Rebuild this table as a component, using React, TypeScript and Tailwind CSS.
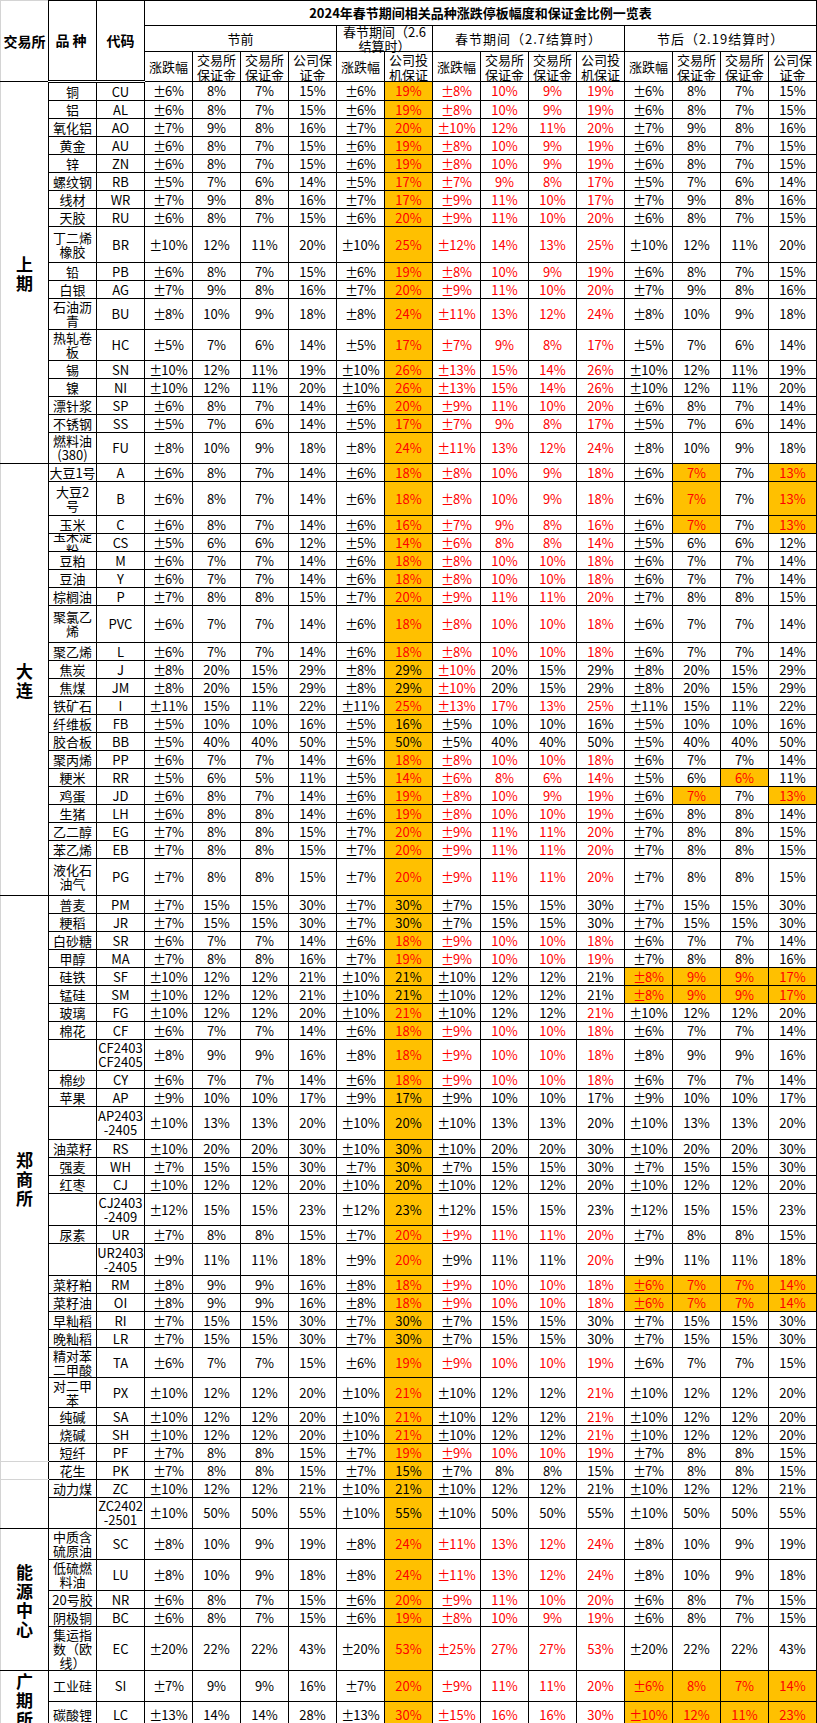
import React from 'react';

type Row = { name: string; code: string; h: number; v: string; red?: string; hi?: string };
type Block = { label: string; rows: Row[]; grayBottom?: boolean; grayTop?: boolean };

// masks over the 14 value columns: 0-3 节前, 4-5 2.6, 6-9 2.7, 10-13 节后
const STD = '00000111110000';
const FG = '00000100010000';
const JJ = '00000010000000';
const HA = '00000000000101';
const HR = '00000000000010';
const H4 = '00000000001111';

const CU = '±6% 8% 7% 15% ±6% 19% ±8% 10% 9% 19% ±6% 8% 7% 15%';
const RB = '±5% 7% 6% 14% ±5% 17% ±7% 9% 8% 17% ±5% 7% 6% 14%';
const BU = '±8% 10% 9% 18% ±8% 24% ±11% 13% 12% 24% ±8% 10% 9% 18%';
const DA = '±6% 8% 7% 14% ±6% 18% ±8% 10% 9% 18% ±6% 7% 7% 13%';
const M = '±6% 7% 7% 14% ±6% 18% ±8% 10% 10% 18% ±6% 7% 7% 14%';
const P = '±7% 8% 8% 15% ±7% 20% ±9% 11% 11% 20% ±7% 8% 8% 15%';
const JT = '±8% 20% 15% 29% ±8% 29% ±10% 20% 15% 29% ±8% 20% 15% 29%';
const PM = '±7% 15% 15% 30% ±7% 30% ±7% 15% 15% 30% ±7% 15% 15% 30%';
const SF = '±10% 12% 12% 21% ±10% 21% ±10% 12% 12% 21% ±8% 9% 9% 17%';
const CF = '±6% 7% 7% 14% ±6% 18% ±9% 10% 10% 18% ±6% 7% 7% 14%';
const RM = '±8% 9% 9% 16% ±8% 18% ±9% 10% 10% 18% ±6% 7% 7% 14%';
const PX = '±10% 12% 12% 20% ±10% 21% ±10% 12% 12% 21% ±10% 12% 12% 20%';

const blocks: Block[] = [
  {
    label: '上期',
    rows: [
      { name: '铜', code: 'CU', h: 18, v: CU, red: STD },
      { name: '铝', code: 'AL', h: 18, v: CU, red: STD },
      { name: '氧化铝', code: 'AO', h: 18, v: '±7% 9% 8% 16% ±7% 20% ±10% 12% 11% 20% ±7% 9% 8% 16%', red: STD },
      { name: '黄金', code: 'AU', h: 18, v: CU, red: STD },
      { name: '锌', code: 'ZN', h: 18, v: CU, red: STD },
      { name: '螺纹钢', code: 'RB', h: 18, v: RB, red: STD },
      { name: '线材', code: 'WR', h: 18, v: '±7% 9% 8% 16% ±7% 17% ±9% 11% 10% 17% ±7% 9% 8% 16%', red: STD },
      { name: '天胶', code: 'RU', h: 18, v: '±6% 8% 7% 15% ±6% 20% ±9% 11% 10% 20% ±6% 8% 7% 15%', red: STD },
      { name: '丁二烯\n橡胶', code: 'BR', h: 36, v: '±10% 12% 11% 20% ±10% 25% ±12% 14% 13% 25% ±10% 12% 11% 20%', red: STD },
      { name: '铅', code: 'PB', h: 18, v: CU, red: STD },
      { name: '白银', code: 'AG', h: 18, v: '±7% 9% 8% 16% ±7% 20% ±9% 11% 10% 20% ±7% 9% 8% 16%', red: STD },
      { name: '石油沥\n青', code: 'BU', h: 31, v: BU, red: STD },
      { name: '热轧卷\n板', code: 'HC', h: 31, v: RB, red: STD },
      { name: '锡', code: 'SN', h: 18, v: '±10% 12% 11% 19% ±10% 26% ±13% 15% 14% 26% ±10% 12% 11% 19%', red: STD },
      { name: '镍', code: 'NI', h: 18, v: '±10% 12% 11% 20% ±10% 26% ±13% 15% 14% 26% ±10% 12% 11% 20%', red: STD },
      { name: '漂针浆', code: 'SP', h: 18, v: '±6% 8% 7% 14% ±6% 20% ±9% 11% 10% 20% ±6% 8% 7% 14%', red: STD },
      { name: '不锈钢', code: 'SS', h: 18, v: RB, red: STD },
      { name: '燃料油\n(380)', code: 'FU', h: 31, v: BU, red: STD },
    ],
  },
  {
    label: '大连',
    rows: [
      { name: '大豆1号', code: 'A', h: 18, v: DA, red: STD, hi: HA },
      { name: '大豆2\n号', code: 'B', h: 34, v: DA, red: STD, hi: HA },
      { name: '玉米', code: 'C', h: 18, v: '±6% 8% 7% 14% ±6% 16% ±7% 9% 8% 16% ±6% 7% 7% 13%', red: STD, hi: HA },
      { name: '玉米淀\n粉', code: 'CS', h: 18, v: '±5% 6% 6% 12% ±5% 14% ±6% 8% 8% 14% ±5% 6% 6% 12%', red: STD },
      { name: '豆粕', code: 'M', h: 18, v: M, red: STD },
      { name: '豆油', code: 'Y', h: 18, v: M, red: STD },
      { name: '棕榈油', code: 'P', h: 18, v: P, red: STD },
      { name: '聚氯乙\n烯', code: 'PVC', h: 37, v: M, red: STD },
      { name: '聚乙烯', code: 'L', h: 18, v: M, red: STD },
      { name: '焦炭', code: 'J', h: 18, v: JT, red: JJ },
      { name: '焦煤', code: 'JM', h: 18, v: JT, red: JJ },
      { name: '铁矿石', code: 'I', h: 18, v: '±11% 15% 11% 22% ±11% 25% ±13% 17% 13% 25% ±11% 15% 11% 22%', red: STD },
      { name: '纤维板', code: 'FB', h: 18, v: '±5% 10% 10% 16% ±5% 16% ±5% 10% 10% 16% ±5% 10% 10% 16%' },
      { name: '胶合板', code: 'BB', h: 18, v: '±5% 40% 40% 50% ±5% 50% ±5% 40% 40% 50% ±5% 40% 40% 50%' },
      { name: '聚丙烯', code: 'PP', h: 18, v: M, red: STD },
      { name: '粳米', code: 'RR', h: 18, v: '±5% 6% 5% 11% ±5% 14% ±6% 8% 6% 14% ±5% 6% 6% 11%', red: STD, hi: HR },
      { name: '鸡蛋', code: 'JD', h: 18, v: '±6% 8% 7% 14% ±6% 19% ±8% 10% 9% 19% ±6% 7% 7% 13%', red: STD, hi: HA },
      { name: '生猪', code: 'LH', h: 18, v: '±6% 8% 8% 14% ±6% 19% ±8% 10% 10% 19% ±6% 8% 8% 14%', red: STD },
      { name: '乙二醇', code: 'EG', h: 18, v: P, red: STD },
      { name: '苯乙烯', code: 'EB', h: 18, v: P, red: STD },
      { name: '液化石\n油气', code: 'PG', h: 37, v: P, red: STD },
    ],
  },
  {
    label: '郑商所',
    grayBottom: true,
    rows: [
      { name: '普麦', code: 'PM', h: 18, v: PM },
      { name: '粳稻', code: 'JR', h: 18, v: PM },
      { name: '白砂糖', code: 'SR', h: 18, v: CF, red: STD },
      { name: '甲醇', code: 'MA', h: 18, v: '±7% 8% 8% 16% ±7% 19% ±9% 10% 10% 19% ±7% 8% 8% 16%', red: STD },
      { name: '硅铁', code: 'SF', h: 18, v: SF, hi: H4 },
      { name: '锰硅', code: 'SM', h: 18, v: SF, hi: H4 },
      { name: '玻璃', code: 'FG', h: 18, v: '±10% 12% 12% 20% ±10% 21% ±10% 12% 12% 21% ±10% 12% 12% 20%', red: FG },
      { name: '棉花', code: 'CF', h: 18, v: CF, red: STD },
      { name: '', code: 'CF2403\nCF2405', h: 31, v: '±8% 9% 9% 16% ±8% 18% ±9% 10% 10% 18% ±8% 9% 9% 16%', red: STD },
      { name: '棉纱', code: 'CY', h: 18, v: CF, red: STD },
      { name: '苹果', code: 'AP', h: 18, v: '±9% 10% 10% 17% ±9% 17% ±9% 10% 10% 17% ±9% 10% 10% 17%' },
      { name: '', code: 'AP2403\n-2405', h: 33, v: '±10% 13% 13% 20% ±10% 20% ±10% 13% 13% 20% ±10% 13% 13% 20%' },
      { name: '油菜籽', code: 'RS', h: 18, v: '±10% 20% 20% 30% ±10% 30% ±10% 20% 20% 30% ±10% 20% 20% 30%' },
      { name: '强麦', code: 'WH', h: 18, v: PM },
      { name: '红枣', code: 'CJ', h: 18, v: '±10% 12% 12% 20% ±10% 20% ±10% 12% 12% 20% ±10% 12% 12% 20%' },
      { name: '', code: 'CJ2403\n-2409', h: 32, v: '±12% 15% 15% 23% ±12% 23% ±12% 15% 15% 23% ±12% 15% 15% 23%' },
      { name: '尿素', code: 'UR', h: 18, v: '±7% 8% 8% 15% ±7% 20% ±9% 11% 11% 20% ±7% 8% 8% 15%', red: STD },
      { name: '', code: 'UR2403\n-2405', h: 32, v: '±9% 11% 11% 18% ±9% 20% ±9% 11% 11% 20% ±9% 11% 11% 18%', red: FG },
      { name: '菜籽粕', code: 'RM', h: 18, v: RM, red: STD, hi: H4 },
      { name: '菜籽油', code: 'OI', h: 18, v: RM, red: STD, hi: H4 },
      { name: '早籼稻', code: 'RI', h: 18, v: PM },
      { name: '晚籼稻', code: 'LR', h: 18, v: PM },
      { name: '精对苯\n二甲酸', code: 'TA', h: 30, v: '±6% 7% 7% 15% ±6% 19% ±9% 10% 10% 19% ±6% 7% 7% 15%', red: STD },
      { name: '对二甲\n苯', code: 'PX', h: 30, v: PX, red: FG },
      { name: '纯碱', code: 'SA', h: 18, v: PX, red: FG },
      { name: '烧碱', code: 'SH', h: 18, v: PX, red: FG },
      { name: '短纤', code: 'PF', h: 18, v: '±7% 8% 8% 15% ±7% 19% ±9% 10% 10% 19% ±7% 8% 8% 15%', red: STD },
    ],
  },
  {
    label: '',
    grayTop: true,
    grayBottom: true,
    rows: [{ name: '花生', code: 'PK', h: 18, v: '±7% 8% 8% 15% ±7% 15% ±7% 8% 8% 15% ±7% 8% 8% 15%' }],
  },
  {
    label: '',
    grayTop: true,
    rows: [
      { name: '动力煤', code: 'ZC', h: 18, v: '±10% 12% 12% 21% ±10% 21% ±10% 12% 12% 21% ±10% 12% 12% 21%' },
      { name: '', code: 'ZC2402\n-2501', h: 31, v: '±10% 50% 50% 55% ±10% 55% ±10% 50% 50% 55% ±10% 50% 50% 55%' },
    ],
  },
  {
    label: '能源中心',
    rows: [
      { name: '中质含\n硫原油', code: 'SC', h: 31, v: '±8% 10% 9% 19% ±8% 24% ±11% 13% 12% 24% ±8% 10% 9% 19%', red: STD },
      { name: '低硫燃\n料油', code: 'LU', h: 31, v: BU, red: STD },
      { name: '20号胶', code: 'NR', h: 18, v: '±6% 8% 7% 15% ±6% 20% ±9% 11% 10% 20% ±6% 8% 7% 15%', red: STD },
      { name: '阴极铜', code: 'BC', h: 18, v: CU, red: STD },
      { name: '集运指\n数（欧\n线）', code: 'EC', h: 44, v: '±20% 22% 22% 43% ±20% 53% ±25% 27% 27% 53% ±20% 22% 22% 43%', red: STD },
    ],
  },
  {
    label: '广期所',
    rows: [
      { name: '工业硅', code: 'SI', h: 28, v: '±7% 9% 9% 16% ±7% 20% ±9% 11% 11% 20% ±6% 8% 7% 14%', red: STD, hi: H4 },
      { name: '碳酸锂', code: 'LC', h: 24, v: '±13% 14% 14% 28% ±13% 30% ±15% 16% 16% 30% ±10% 12% 11% 23%', red: STD, hi: H4 },
    ],
  },
];

const heightClass: Record<number, string> = {
  18: 'h-[17px]',
  24: 'h-[23px]',
  28: 'h-[27px]',
  30: 'h-[29px]',
  31: 'h-[30px]',
  32: 'h-[31px]',
  33: 'h-[32px]',
  34: 'h-[33px]',
  36: 'h-[35px]',
  37: 'h-[36px]',
  44: 'h-[43px]',
};

const subHeads = [
  '涨跌幅', '交易所\n保证金', '交易所\n保证金', '公司保\n证金',
  '涨跌幅', '公司投\n机保证',
  '涨跌幅', '交易所\n保证金', '交易所\n保证金', '公司投\n机保证',
  '涨跌幅', '交易所\n保证金', '交易所\n保证金', '公司保\n证金',
];

const cell = 'border border-black p-0 align-middle';

function Value({ text }: { text: string }) {
  if (text.startsWith('±')) {
    return (
      <>
        <span className="inline-block w-[12px] text-center">±</span>
        {text.slice(1)}
      </>
    );
  }
  return <>{text}</>;
}

export default function App() {
  return (
    <div className="w-[817px] bg-white text-black font-['Liberation_Sans_Narrow','Noto_Sans_CJK_SC',sans-serif]">
      <table className="w-[817px] table-fixed border-collapse">
        <colgroup>
          {Array.from({ length: 17 }).map((_, i) => (
            <col key={i} className="w-[48px]" />
          ))}
        </colgroup>
        <thead>
          <tr>
            <th rowSpan={3} className="border border-black border-l-[#d4d4d4] border-t-[#d4d4d4] p-0 align-middle text-[14px] font-bold">
              交易所
            </th>
            <th rowSpan={3} className="border border-double border-black border-b-[3px] p-0 align-middle text-[14px] font-bold tracking-[3px]">
              品种
            </th>
            <th rowSpan={3} className="border border-double border-black border-b-[3px] p-0 align-middle text-[14px] font-bold">
              代码
            </th>
            <th colSpan={14} className={cell}>
              <div className="flex h-[24px] items-center justify-center text-[13px] font-bold">
                2024年春节期间相关品种涨跌停板幅度和保证金比例一览表
              </div>
            </th>
          </tr>
          <tr>
            <th colSpan={4} className={cell}>
              <div className="flex h-[25px] items-center justify-center text-[13px] font-normal">节前</div>
            </th>
            <th colSpan={2} className={cell}>
              <div className="flex h-[25px] items-center justify-center whitespace-pre-line text-[13px] leading-[14px] font-normal">
                {'春节期间（2.6\n结算时）'}
              </div>
            </th>
            <th colSpan={4} className={cell}>
              <div className="flex h-[25px] items-center justify-center text-[13px] font-normal tracking-[1px]">
                春节期间（2.7结算时）
              </div>
            </th>
            <th colSpan={4} className={cell}>
              <div className="flex h-[25px] items-center justify-center text-[13px] font-normal tracking-[1px]">
                节后（2.19结算时）
              </div>
            </th>
          </tr>
          <tr>
            {subHeads.map((s, i) => (
              <th key={i} className={cell}>
                <div className="flex h-[29px] items-center justify-center whitespace-pre-line text-[13px] leading-[15px] font-normal">
                  {s}
                </div>
              </th>
            ))}
          </tr>
        </thead>
        <tbody>
          {blocks.map((b, bi) =>
            b.rows.map((r, ri) => {
              const vals = r.v.split(' ');
              const hc = heightClass[r.h];
              return (
                <tr key={`${bi}-${ri}`}>
                  {ri === 0 && (
                    <td
                      rowSpan={b.rows.length}
                      className={`border border-black border-l-[#d4d4d4] p-0 align-middle ${
                        b.grayBottom ? 'border-b-[#d4d4d4]' : ''
                      } ${b.grayTop ? 'border-t-[#d4d4d4]' : ''}`}
                    >
                      <div className="flex flex-col items-center text-[17px] leading-[19px] font-bold">
                        {[...b.label].map((c, ci) => (
                          <span key={ci}>{c}</span>
                        ))}
                      </div>
                    </td>
                  )}
                  <td className={cell}>
                    <div className={`flex items-center justify-center overflow-hidden whitespace-pre-line text-center text-[13px] leading-[14px] ${hc}`}>
                      {r.name}
                    </div>
                  </td>
                  <td className={cell}>
                    <div className={`flex items-center justify-center overflow-hidden whitespace-pre-line text-center text-[13px] leading-[14px] ${hc}`}>
                      {r.code}
                    </div>
                  </td>
                  {vals.map((val, j) => {
                    const hi = j === 5 || r.hi?.[j] === '1';
                    const red = r.red?.[j] === '1' || r.hi?.[j] === '1';
                    return (
                      <td key={j} className={`${cell} ${hi ? 'bg-[#ffc000]' : 'bg-white'}`}>
                        <div
                          className={`flex items-center justify-center text-[13px] ${hc} ${
                            red ? 'text-[#ff0000]' : 'text-black'
                          }`}
                        >
                          <Value text={val} />
                        </div>
                      </td>
                    );
                  })}
                </tr>
              );
            })
          )}
        </tbody>
      </table>
    </div>
  );
}
